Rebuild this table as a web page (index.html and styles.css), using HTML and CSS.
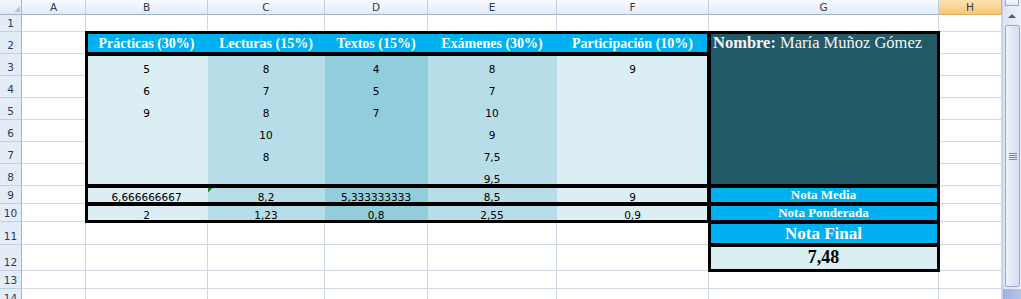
FILE: index.html
```html
<!DOCTYPE html>
<html lang="es">
<head>
<meta charset="utf-8">
<title>Notas</title>
<link rel="stylesheet" href="styles.css">
</head>
<body>
<div class="app">
  <div class="stage">
    <div class="cells">
      <div class="corner"></div><div class="ch">A</div><div class="ch">B</div><div class="ch">C</div><div class="ch">D</div><div class="ch">E</div><div class="ch">F</div><div class="ch">G</div><div class="ch sel">H</div>

      <div class="rh">1</div><div class="c"></div><div class="c"></div><div class="c"></div><div class="c"></div><div class="c"></div><div class="c"></div><div class="c"></div><div class="c"></div>

      <div class="rh">2</div><div class="c"></div><div class="hd">Prácticas (30%)</div><div class="hd">Lecturas (15%)</div><div class="hd">Textos (15%)</div><div class="hd">Exámenes (30%)</div><div class="hd">Participación (10%)</div><div class="dk name"><b>Nombre:</b>&nbsp;María Muñoz Gómez</div><div class="c"></div>

      <div class="rh">3</div><div class="c"></div><div class="f1">5</div><div class="f2">8</div><div class="f3">4</div><div class="f2">8</div><div class="f1">9</div><div class="dk"></div><div class="c"></div>

      <div class="rh">4</div><div class="c"></div><div class="f1">6</div><div class="f2">7</div><div class="f3">5</div><div class="f2">7</div><div class="f1"></div><div class="dk"></div><div class="c"></div>

      <div class="rh">5</div><div class="c"></div><div class="f1">9</div><div class="f2">8</div><div class="f3">7</div><div class="f2">10</div><div class="f1"></div><div class="dk"></div><div class="c"></div>

      <div class="rh">6</div><div class="c"></div><div class="f1"></div><div class="f2">10</div><div class="f3"></div><div class="f2">9</div><div class="f1"></div><div class="dk"></div><div class="c"></div>

      <div class="rh">7</div><div class="c"></div><div class="f1"></div><div class="f2">8</div><div class="f3"></div><div class="f2">7,5</div><div class="f1"></div><div class="dk"></div><div class="c"></div>

      <div class="rh">8</div><div class="c"></div><div class="f1"></div><div class="f2"></div><div class="f3"></div><div class="f2">9,5</div><div class="f1"></div><div class="dk"></div><div class="c"></div>

      <div class="rh">9</div><div class="c"></div><div class="f1">6,666666667</div><div class="f2">8,2</div><div class="f3">5,333333333</div><div class="f2">8,5</div><div class="f1">9</div><div class="hd label">Nota Media</div><div class="c"></div>

      <div class="rh">10</div><div class="c"></div><div class="f1">2</div><div class="f2">1,23</div><div class="f3">0,8</div><div class="f2">2,55</div><div class="f1">0,9</div><div class="hd label">Nota Ponderada</div><div class="c"></div>

      <div class="rh">11</div><div class="c"></div><div class="c"></div><div class="c"></div><div class="c"></div><div class="c"></div><div class="c"></div><div class="hd final">Nota Final</div><div class="c"></div>

      <div class="rh">12</div><div class="c"></div><div class="c"></div><div class="c"></div><div class="c"></div><div class="c"></div><div class="c"></div><div class="f1 grade">7,48</div><div class="c"></div>

      <div class="rh">13</div><div class="c"></div><div class="c"></div><div class="c"></div><div class="c"></div><div class="c"></div><div class="c"></div><div class="c"></div><div class="c"></div>

      <div class="rh">14</div><div class="c"></div><div class="c"></div><div class="c"></div><div class="c"></div><div class="c"></div><div class="c"></div><div class="c"></div><div class="c"></div>
    </div>
    <div class="frames">
      <div class="box r-head"></div>
      <div class="box r-data"></div>
      <div class="box r-media"></div>
      <div class="box r-pond"></div>
      <div class="box g-name"></div>
      <div class="box g-media"></div>
      <div class="box g-pond"></div>
      <div class="box g-final"></div>
      <div class="box g-grade"></div>
      <div class="err"></div>
    </div>
  </div>
  <div class="vscroll">
    <div class="split"></div>
    <div class="arrow"></div>
    <div class="thumb"><span class="grip"></span></div>
    <div class="track"></div>
  </div>
</div>
</body>
</html>
```

FILE: styles.css
```css
html, body {
  margin: 0;
  padding: 0;
  background: #fff;
  overflow: hidden;
}

.app {
  display: flex;
  width: 1021px;
  height: 299px;
  overflow: hidden;
}

.stage {
  display: grid;
  flex: none;
  width: 1002px;
}

.cells,
.frames {
  grid-area: 1 / 1;
  display: grid;
  grid-template-columns: 22px 64px 122px 117px 103px 129px 152px 230px 63px;
  grid-template-rows: 15px 17px repeat(7, 22px) 18px 18px 23px 26px 18px 18px;
}

.frames {
  pointer-events: none;
}

.cells > div {
  box-sizing: border-box;
  border-right: 1px solid #d0d7e5;
  border-bottom: 1px solid #d0d7e5;
  display: flex;
  align-items: flex-end;
  justify-content: center;
  white-space: nowrap;
  font-family: "DejaVu Sans", sans-serif;
  font-size: 10.5px;
  line-height: 1;
  color: #000;
  padding-bottom: 1px;
}

/* headers */
.cells > .corner {
  background: linear-gradient(#f4f7fc, #e2e9f4);
  border-right: 1px solid #9eb6ce;
  border-bottom: 1px solid #9eb6ce;
  justify-content: flex-end;
  padding: 0 1px 2px 0;
}
.corner::after {
  content: "";
  width: 0;
  height: 0;
  border-style: solid;
  border-width: 0 0 6px 6px;
  border-color: transparent transparent #b6c4d8 transparent;
}

.cells > .ch {
  background: linear-gradient(#f8fafd, #e3eaf5);
  border-right: 1px solid #c3cedd;
  border-bottom: 1px solid #9eb6ce;
  align-items: center;
  padding: 0;
  color: #2b3a52;
  font-size: 10.5px;
}
.cells > .ch.sel {
  background: linear-gradient(#fbe3b4, #f6c874);
  border-right-color: #e2ad5c;
  border-bottom-color: #e2ad5c;
}

.cells > .rh {
  background: #e4ecf7;
  border-right: 1px solid #9eb6ce;
  border-bottom: 1px solid #c2cfe1;
  color: #2b3a52;
  padding-bottom: 3px;
}

/* fills */
.cells > .f1 { background: #daeef3; border-color: transparent; }
.cells > .f2 { background: #b7dde8; border-color: transparent; }
.cells > .f3 { background: #92cddc; border-color: transparent; }
.cells > .dk { background: #215967; border-color: transparent; }

.cells > .hd {
  background: #00b0f0;
  border-color: transparent;
  color: #fff;
  font-family: "Liberation Serif", serif;
  font-weight: bold;
  font-size: 14px;
  padding-bottom: 2px;
}
.cells > .hd.label {
  font-size: 13px;
  padding-bottom: 2px;
}
.cells > .hd.final {
  font-size: 17px;
  padding-bottom: 2px;
}
.cells > .grade {
  font-family: "Liberation Serif", serif;
  font-weight: bold;
  font-size: 18px;
  padding-bottom: 4px;
}

.cells > .name {
  justify-content: flex-start;
  padding-left: 4px;
  padding-bottom: 2px;
  font-family: "Liberation Serif", serif;
  font-size: 16.5px;
  color: #f4f4f4;
}

/* thick borders */
.box {
  border: 3px solid #000;
  margin: -1px;
}
.r-head  { grid-row: 3 / 4;  grid-column: 3 / 8; }
.r-data  { grid-row: 4 / 10; grid-column: 3 / 8; }
.r-media { grid-row: 10 / 11; grid-column: 3 / 8; }
.r-pond  { grid-row: 11 / 12; grid-column: 3 / 8; }
.g-name  { grid-row: 3 / 10; grid-column: 8 / 9; }
.g-media { grid-row: 10 / 11; grid-column: 8 / 9; }
.g-pond  { grid-row: 11 / 12; grid-column: 8 / 9; }
.g-final { grid-row: 12 / 13; grid-column: 8 / 9; }
.g-grade { grid-row: 13 / 14; grid-column: 8 / 9; }

.err {
  grid-row: 10 / 11;
  grid-column: 4 / 5;
  align-self: start;
  justify-self: start;
  width: 5px;
  height: 5px;
  margin-top: 2px;
  background: linear-gradient(135deg, #1b8a1b 50%, transparent 50%);
}

/* vertical scrollbar */
.vscroll {
  width: 19px;
  flex: none;
  box-sizing: border-box;
  display: flex;
  flex-direction: column;
  background: linear-gradient(90deg, #dbe4f3, #edf2fa);
  border-left: 1px solid #c4d1e6;
}
.split {
  height: 6px;
  margin: 0 2px 0 2px;
  box-sizing: border-box;
  border: 1px solid #97abcf;
  border-top: none;
  background: linear-gradient(#f6f8fc, #e1e8f4);
}
.arrow {
  height: 16px;
  margin-top: 2px;
  display: flex;
  align-items: center;
  justify-content: center;
}
.arrow::before {
  content: "";
  width: 0;
  height: 0;
  border-style: solid;
  border-width: 0 4px 4px 4px;
  border-color: transparent transparent #4a5f86 transparent;
}
.thumb {
  height: 262px;
  margin: 1px 1px 0 2px;
  box-sizing: border-box;
  border: 1px solid #97abd0;
  border-radius: 2px;
  background: linear-gradient(90deg, #eef3fb, #d3def1);
  display: flex;
  align-items: center;
  justify-content: center;
}
.grip {
  width: 8px;
  height: 7px;
  background: repeating-linear-gradient(#7d8fae 0 1px, transparent 1px 2px);
}
.track {
  flex: 1;
  margin-top: 2px;
  background: linear-gradient(90deg, #9db3df, #b3c6ea);
}
```
